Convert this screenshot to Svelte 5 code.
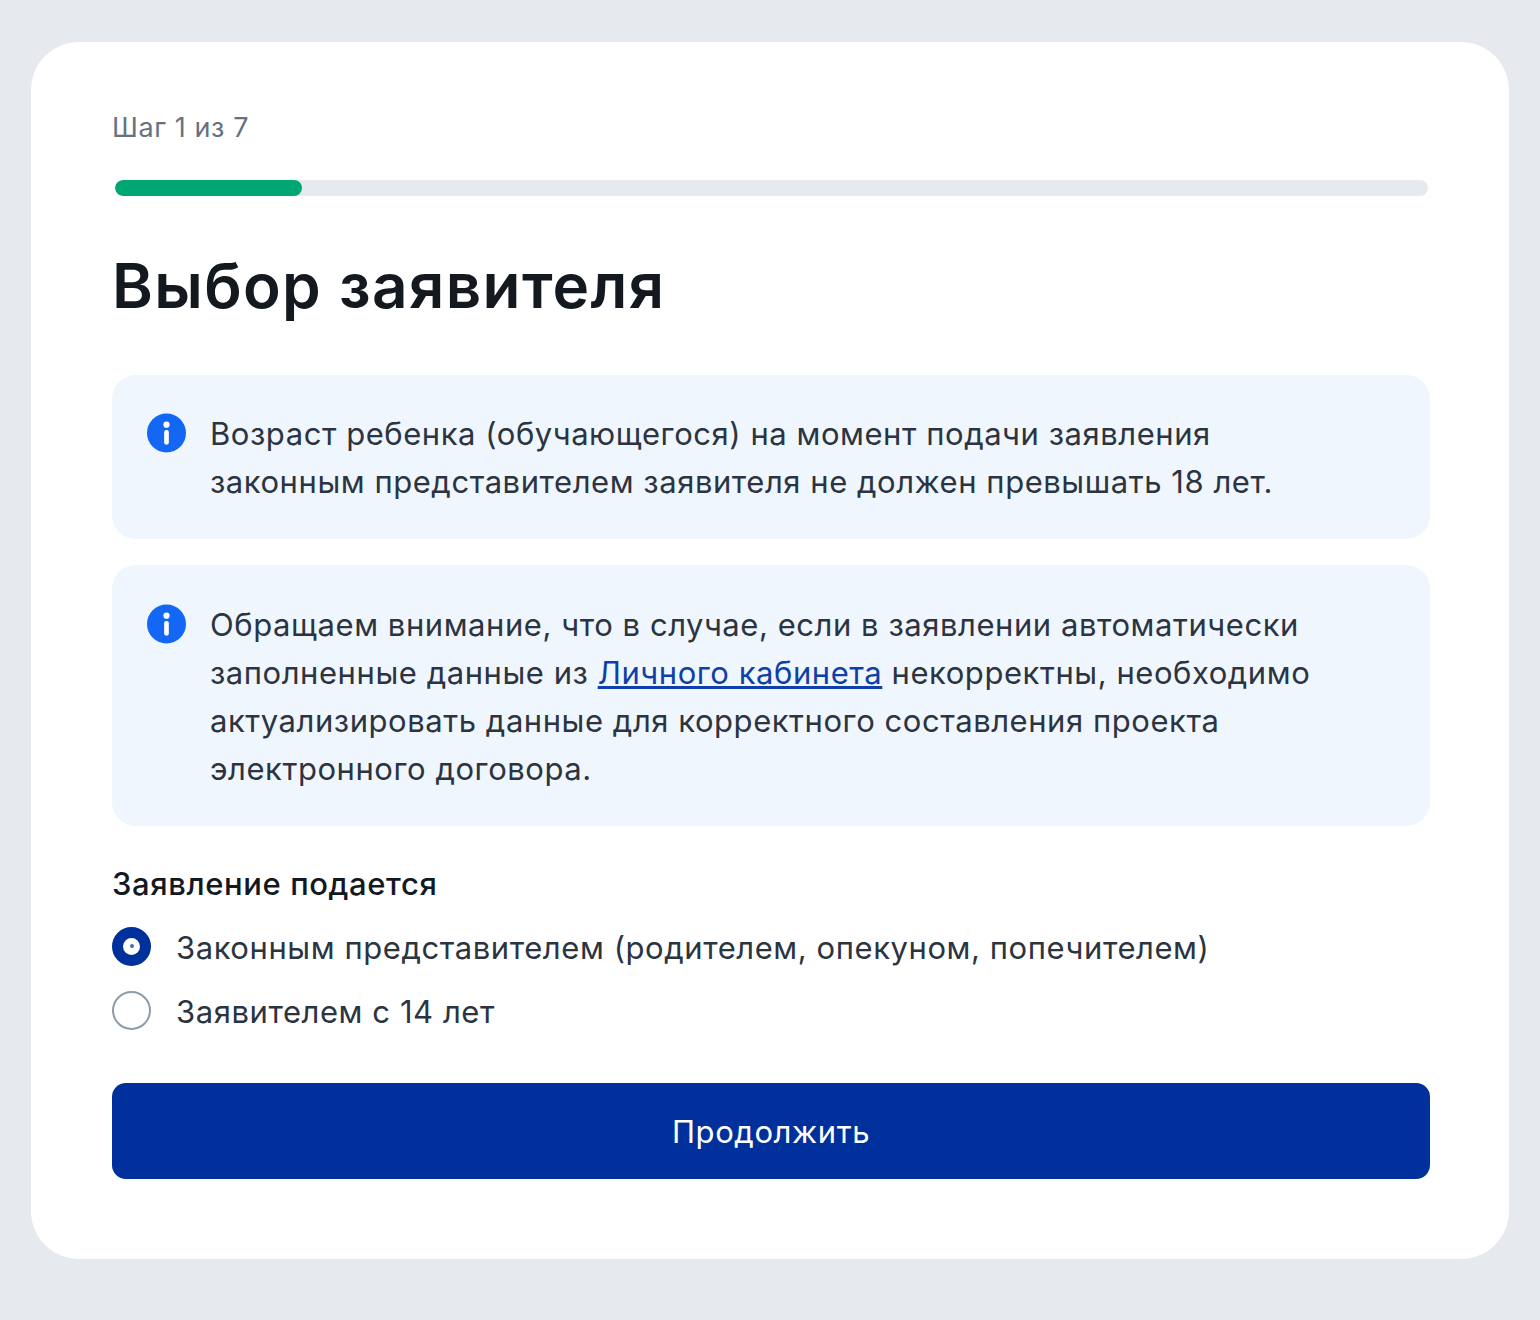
<script>
    const steps = 7;
    const current = 1;
    let who = $state('parent');
</script>

<div class="page">
    <div class="card">
        <div class="step">Шаг {current} из {steps}</div>
        <div class="track"><div class="fill" style="width: {100 * current / steps}%"></div></div>
        <h1>Выбор заявителя</h1>

        <div class="note first">
            <svg class="info" viewBox="0 0 40 40">
                <circle cx="20" cy="20" r="20" fill="#1467f5" />
                <circle cx="20" cy="11.5" r="3.2" fill="#fff" />
                <rect x="17.6" y="17" width="4.8" height="15" rx="2.2" fill="#fff" />
            </svg>
            <p>Возраст ребенка (обучающегося) на момент подачи заявления<br>законным представителем заявителя не должен превышать 18 лет.</p>
        </div>

        <div class="note second">
            <svg class="info" viewBox="0 0 40 40">
                <circle cx="20" cy="20" r="20" fill="#1467f5" />
                <circle cx="20" cy="11.5" r="3.2" fill="#fff" />
                <rect x="17.6" y="17" width="4.8" height="15" rx="2.2" fill="#fff" />
            </svg>
            <p>Обращаем внимание, что в случае, если в заявлении автоматически<br>заполненные данные из <a href="#lk">Личного кабинета</a> некорректны, необходимо<br>актуализировать данные для корректного составления проекта<br>электронного договора.</p>
        </div>

        <div class="label">Заявление подается</div>
        <label class="radio">
            <input type="radio" bind:group={who} value="parent" />
            <span class="mark"></span>
            Законным представителем (родителем, опекуном, попечителем)
        </label>
        <label class="radio">
            <input type="radio" bind:group={who} value="self" />
            <span class="mark"></span>
            Заявителем с 14 лет
        </label>

        <button type="button">Продолжить</button>
    </div>
</div>

<style>
    :global(body) {
        margin: 0;
        background: #e6e9ee;
        font-family: Inter, "Noto Sans", sans-serif;
    }

    .page {
        height: 1320px;
        box-sizing: border-box;
        padding: 42px 31px 0;
    }

    .card {
        box-sizing: border-box;
        height: 1217px;
        background: #fff;
        border-radius: 48px;
        padding: 71px 79px 0 81px;
        display: flex;
        flex-direction: column;
    }

    .step {
        font-size: 27px;
        line-height: 30px;
        color: #66727f;
        letter-spacing: 0.6px;
    }

    .track {
        margin: 37px 2.5px 0;
        height: 16px;
        border-radius: 8px;
        background: #e6e9ee;
        overflow: hidden;
    }

    .fill {
        height: 100%;
        border-radius: 8px;
        background: #00a773;
    }

    h1 {
        margin: 50px 0 0;
        font-size: 62px;
        line-height: 80px;
        font-weight: 600;
        letter-spacing: 1.35px;
        color: #14181f;
    }

    .note {
        background: #f0f6fe;
        border-radius: 24px;
        padding: 0 34px;
        display: flex;
        gap: 24px;
        box-sizing: border-box;
    }

    .first {
        margin-top: 49px;
        height: 164px;
        padding-top: 35px;
    }

    .second {
        margin-top: 26px;
        height: 261px;
        padding-top: 36px;
    }

    .info {
        width: 39px;
        height: 40px;
        flex: none;
        margin-left: 1px;
        margin-top: 3px;
    }

    .note p {
        margin: 0;
        font-size: 31px;
        line-height: 48px;
        color: #2b3440;
        letter-spacing: 0.55px;
    }

    a {
        color: #0f3fa8;
    }

    .label {
        margin-top: 38px;
        font-size: 31px;
        line-height: 40px;
        font-weight: 500;
        letter-spacing: 0.6px;
        color: #14181f;
    }

    .radio {
        display: flex;
        align-items: center;
        gap: 24px;
        height: 40px;
        margin-top: 24px;
        font-size: 31px;
        letter-spacing: 0.57px;
        color: #2b3440;
    }

    .label + .radio {
        margin-top: 23px;
    }

    .radio input {
        display: none;
    }

    .mark {
        box-sizing: border-box;
        width: 39px;
        height: 39px;
        margin: -2px 1px 0 0;
        border-radius: 50%;
        border: 2px solid #8e9bab;
        background: #fff;
        display: flex;
        align-items: center;
        justify-content: center;
    }

    .radio input:checked + .mark {
        border: 11px solid #00309b;
    }

    .radio input:checked + .mark::after {
        content: "";
        width: 4px;
        height: 4px;
        border-radius: 50%;
        background: #4a6db8;
    }

    button {
        margin-top: 52px;
        height: 96px;
        border: 0;
        border-radius: 14px;
        background: #00309b;
        color: #fff;
        font: inherit;
        font-size: 31px;
        letter-spacing: 0.6px;
    }
</style>
